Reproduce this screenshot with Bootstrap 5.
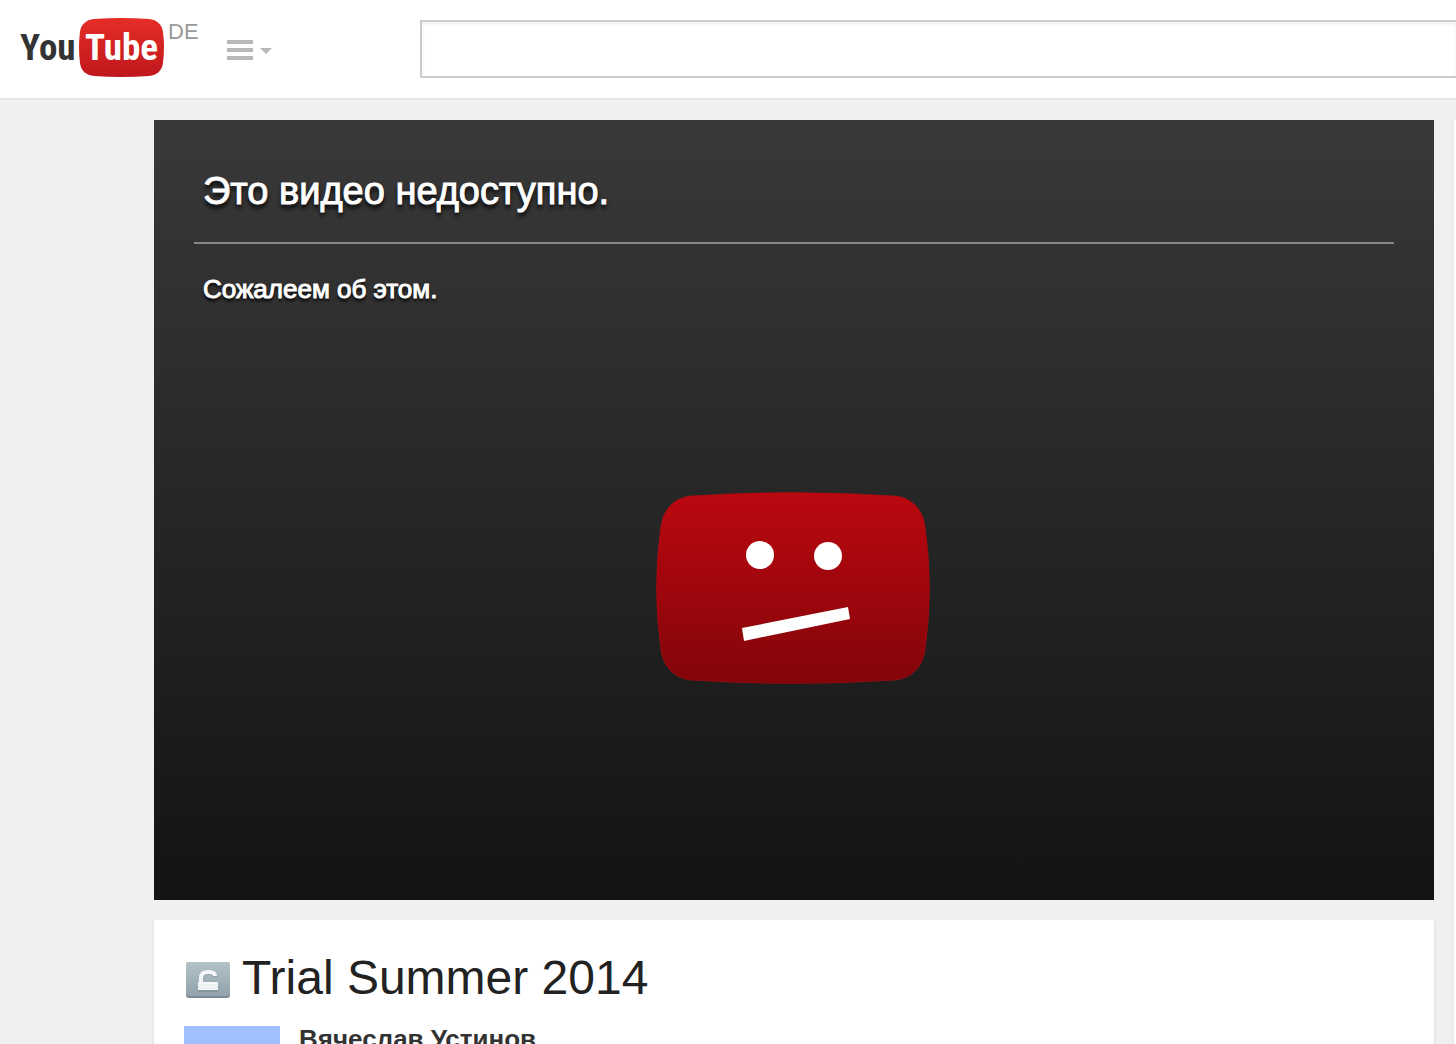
<!DOCTYPE html>
<html lang="ru">
<head>
<meta charset="utf-8">
<meta name="viewport" content="width=device-width, initial-scale=1">
<title>Trial Summer 2014 - YouTube</title>
<link href="https://cdn.jsdelivr.net/npm/bootstrap@5.3.0/dist/css/bootstrap.min.css" rel="stylesheet">
<style>
body { background: #f0f0f0; color: #222; font-family: "Liberation Sans", Arial, sans-serif; }
.masthead { padding: 18px 0 20px 20px; border-bottom: 2px solid #e6e6e6; }
.brand-link { width: 180px; height: 60px; }
.brand-word { font: bold 37px/60px "Roboto Condensed", Roboto, sans-serif; color: #333; }
.brand-tube { position: relative; width: 85px; height: 60px; color: #fff; }
.brand-tube svg { position: absolute; left: 0; top: 0; }
.brand-tube span { position: relative; }
.brand-you { width: 59px; }
.region { font-size: 22px; line-height: 28px; color: #999; }
.guide-btn { margin-left: 27px; padding-top: 4px; }
.search-gap { margin-left: 147px; padding-top: 2px; }
.search-box { height: 58px; border: 2px solid #ccc; border-right: 0; border-radius: 0; box-shadow: inset 0 2px 4px #eee; font-size: 32px; }
.watch { padding: 20px 0 0 154px; gap: 20px; }
.player { aspect-ratio: 64 / 39; background: linear-gradient(#393939, #131313); padding: 40px; color: #fff; }
.player-title { font-size: 38px; line-height: 62px; padding: 0 9px 20px; border-bottom: 2px solid #888; text-shadow: 0 4px 4px #000; -webkit-text-stroke: 1px #fff; }
.player-note { font-size: 26px; line-height: 30px; padding: 30px 9px 0; text-shadow: 0 3px 3px #000; -webkit-text-stroke: 1px #fff; }
.sad-face { position: absolute; left: 50%; top: 60%; transform: translate(-50%, -50%); }
.panel { background: #fff; box-shadow: 0 2px 4px rgba(0, 0, 0, .1); }
.info { margin-top: 20px; padding: 30px; }
.video-title { font-size: 48px; line-height: 56px; gap: 10px; margin-bottom: 20px; }
.avatar { width: 96px; height: 96px; background: #9fbfff; }
.owner { font-size: 26px; line-height: 26px; color: #333; margin-left: 19px; }
.related { flex: 0 0 2px; }
</style>
<script src="https://cdn.jsdelivr.net/npm/bootstrap@5.3.0/dist/js/bootstrap.bundle.min.js"></script>
</head>
<body class="vh-100 overflow-hidden d-flex flex-column">
<header class="masthead bg-white d-flex align-items-center flex-shrink-0">
  <a href="#" class="brand-link d-flex text-decoration-none flex-shrink-0" aria-label="YouTube DE">
    <span class="brand-word brand-you flex-shrink-0">You</span>
    <span class="brand-word brand-tube d-flex justify-content-center flex-shrink-0">
      <svg width="85" height="59" viewBox="0 0 85 59" aria-hidden="true">
        <defs><linearGradient id="logoRed" x2="0" y2="1"><stop stop-color="#e52d27"/><stop offset="1" stop-color="#bf171d"/></linearGradient></defs>
        <path fill="url(#logoRed)" d="M15 1Q42-1 70 1C78 2 83 6 84 14Q86 29 84 45C83 53 78 57 70 58Q42 60 15 58C7 57 2 53 1 45Q-1 29 1 14C2 6 7 2 15 1Z"/>
      </svg>
      <span>Tube</span>
    </span>
    <span class="region ms-1">DE</span>
  </a>
  <button type="button" class="guide-btn btn px-0 pb-0 border-0 d-flex flex-shrink-0" aria-label="Menu">
    <svg width="46" height="20" viewBox="0 0 46 20" fill="#b8b8b8"><path d="M0 0h26v4H0zM0 8h26v4H0zM0 16h26v4H0zM33 8h12l-6 6z"/></svg>
  </button>
  <form class="search-gap flex-grow-1">
    <input type="search" class="search-box form-control" aria-label="Search">
  </form>
</header>
<div class="watch d-flex flex-grow-1">
  <main class="flex-grow-1">
    <section class="player position-relative">
      <h1 class="player-title m-0">Это видео недоступно.</h1>
      <p class="player-note m-0">Сожалеем об этом.</p>
      <svg class="sad-face" width="276" height="192" viewBox="0 0 276 192" aria-hidden="true">
        <defs><linearGradient id="faceRed" x2="0" y2="1"><stop stop-color="#bb080f"/><stop offset="1" stop-color="#82050a"/></linearGradient></defs>
        <path fill="url(#faceRed)" stroke="#b4090f" stroke-opacity=".5" d="M34 4Q137-3 240 4C256 6 267 18 269 34Q278 96 269 158C267 174 256 186 240 188Q137 195 34 188C18 186 7 174 5 158Q-4 96 5 34C7 18 18 6 34 4Z"/>
        <g fill="#fff"><circle cx="104" cy="63" r="14"/><circle cx="172" cy="64" r="14"/><path d="M86 136L192 115L194 127L88 149Z"/></g>
      </svg>
    </section>
    <section class="panel info">
      <h2 class="video-title d-flex align-items-center fw-normal">
        <svg width="48" height="40" viewBox="0 0 48 40" aria-hidden="true">
          <defs><linearGradient id="lockTile" x2="0" y2="1"><stop stop-color="#b4c2c7"/><stop offset="1" stop-color="#90a2ab"/></linearGradient></defs>
          <rect x="2" y="4" width="44" height="36" rx="3" fill="#7c8c95"/>
          <rect x="2" y="4" width="44" height="34" rx="3" fill="url(#lockTile)"/>
          <path d="M17 25v-5q0-6 7-6t7 4" fill="none" stroke="#8fa0a8" stroke-width="4" transform="translate(0 1)"/>
          <path d="M17 25v-5q0-6 7-6t7 4" fill="none" stroke="#f4f6f7" stroke-width="4"/>
          <path fill="#84969e" d="M14 25h20v9H14z"/>
          <path fill="#f7f8f9" d="M14 24h20v8H14z"/><path stroke="#dfe5e7" d="M14 27h20M14 30h20"/>
        </svg>
        <span>Trial Summer 2014</span>
      </h2>
      <div class="d-flex">
        <div class="avatar flex-shrink-0"></div>
        <a href="#" class="owner fw-bold text-decoration-none">Вячеслав Устинов</a>
      </div>
    </section>
  </main>
  <aside class="related panel" aria-label="Related"></aside>
</div>
</body>
</html>
